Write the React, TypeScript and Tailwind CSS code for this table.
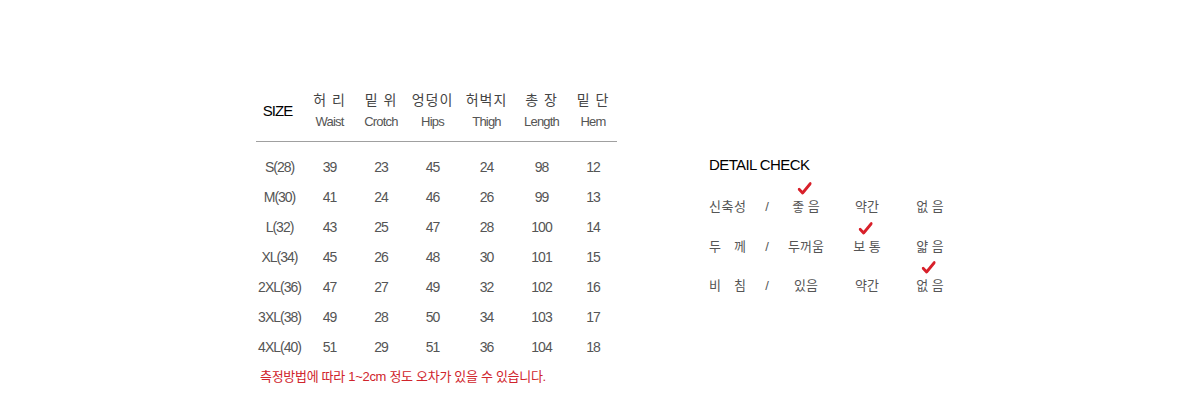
const FONT = "font-['Liberation_Sans','Noto_Sans_CJK_KR',sans-serif]"

const HEADERS = [
  { ko: "허 리", en: "Waist" },
  { ko: "밑 위", en: "Crotch" },
  { ko: "엉덩이", en: "Hips" },
  { ko: "허벅지", en: "Thigh" },
  { ko: "총 장", en: "Length" },
  { ko: "밑 단", en: "Hem" },
]

const ROWS = [
  ["S(28)", "39", "23", "45", "24", "98", "12"],
  ["M(30)", "41", "24", "46", "26", "99", "13"],
  ["L(32)", "43", "25", "47", "28", "100", "14"],
  ["XL(34)", "45", "26", "48", "30", "101", "15"],
  ["2XL(36)", "47", "27", "49", "32", "102", "16"],
  ["3XL(38)", "49", "28", "50", "34", "103", "17"],
  ["4XL(40)", "51", "29", "51", "36", "104", "18"],
]

const CHECKS = [
  { label: ["신", "축", "성"], opts: ["좋 음", "약간", "없 음"], on: 0 },
  { label: ["두", "께"], opts: ["두꺼움", "보 통", "얇 음"], on: 1 },
  { label: ["비", "침"], opts: ["있음", "약간", "없 음"], on: 2 },
]

const COLS = "grid grid-cols-[47px_53px_50px_53px_55px_55px_48px]"

function Check() {
  return (
    <svg className="absolute left-1/2 -top-[15px] -translate-x-[60%]" width="14" height="13" viewBox="0 0 14 13" aria-hidden="true">
      <path d="M1.5 7.2 L5 11 L12.8 1.5" fill="none" stroke="#d8202a" strokeWidth="2.8" strokeLinecap="round" strokeLinejoin="round" />
    </svg>
  )
}

export default function App() {
  return (
    <div className={`w-[1200px] h-[410px] bg-white flex pl-[256px] pt-[90px] gap-[92px] ${FONT}`}>
      {/* size table */}
      <div className="w-[361px]">
        <div className={`${COLS} border-b border-[#a0a0a0] pb-[9px]`}>
          <div className="row-span-2 flex items-center justify-center text-[15px] text-black tracking-[-1px] -translate-x-[2px] pt-[1px]">SIZE</div>
          {HEADERS.map((h) => (
            <div key={h.ko} className="h-5 flex items-center justify-center text-[14px] text-[#444] tracking-[1px]">{h.ko}</div>
          ))}
          {HEADERS.map((h) => (
            <div key={h.en} className="mt-[2px] h-5 flex items-center justify-center text-[13px] text-[#555] tracking-[-0.8px]">{h.en}</div>
          ))}
        </div>
        <div className="pt-[10px]">
          {ROWS.map((r) => (
            <div key={r[0]} className={`${COLS} h-[30px] items-center text-[14px] text-[#555] tracking-[-1px]`}>
              {r.map((c, i) => (
                <div key={i} className="text-center">{c}</div>
              ))}
            </div>
          ))}
        </div>
        <p className="mt-[5px] h-5 leading-5 pl-[4px] text-[13px] text-[#d0242c] tracking-[-0.3px]">
          측정방법에 따라 1~2cm 정도 오차가 있을 수 있습니다.
        </p>
      </div>

      {/* detail check */}
      <div className="pt-[66px]">
        <h2 className="text-[15px] leading-[18px] text-black tracking-[-0.6px]">DETAIL CHECK</h2>
        <div className="mt-[13px]">
          {CHECKS.map((row) => (
            <div key={row.opts[0]} className="grid grid-cols-[48px_20px_58px_64px_62px] h-[39.5px] items-center text-[13px] text-[#555]">
              <div className="w-[37px] flex justify-between">
                {row.label.map((ch) => (
                  <span key={ch}>{ch}</span>
                ))}
              </div>
              <div className="text-center">/</div>
              {row.opts.map((o, i) => (
                <div key={i} className="text-center">
                  <span className="relative inline-block">
                    {row.on === i && <Check />}
                    {o}
                  </span>
                </div>
              ))}
            </div>
          ))}
        </div>
      </div>
    </div>
  )
}
